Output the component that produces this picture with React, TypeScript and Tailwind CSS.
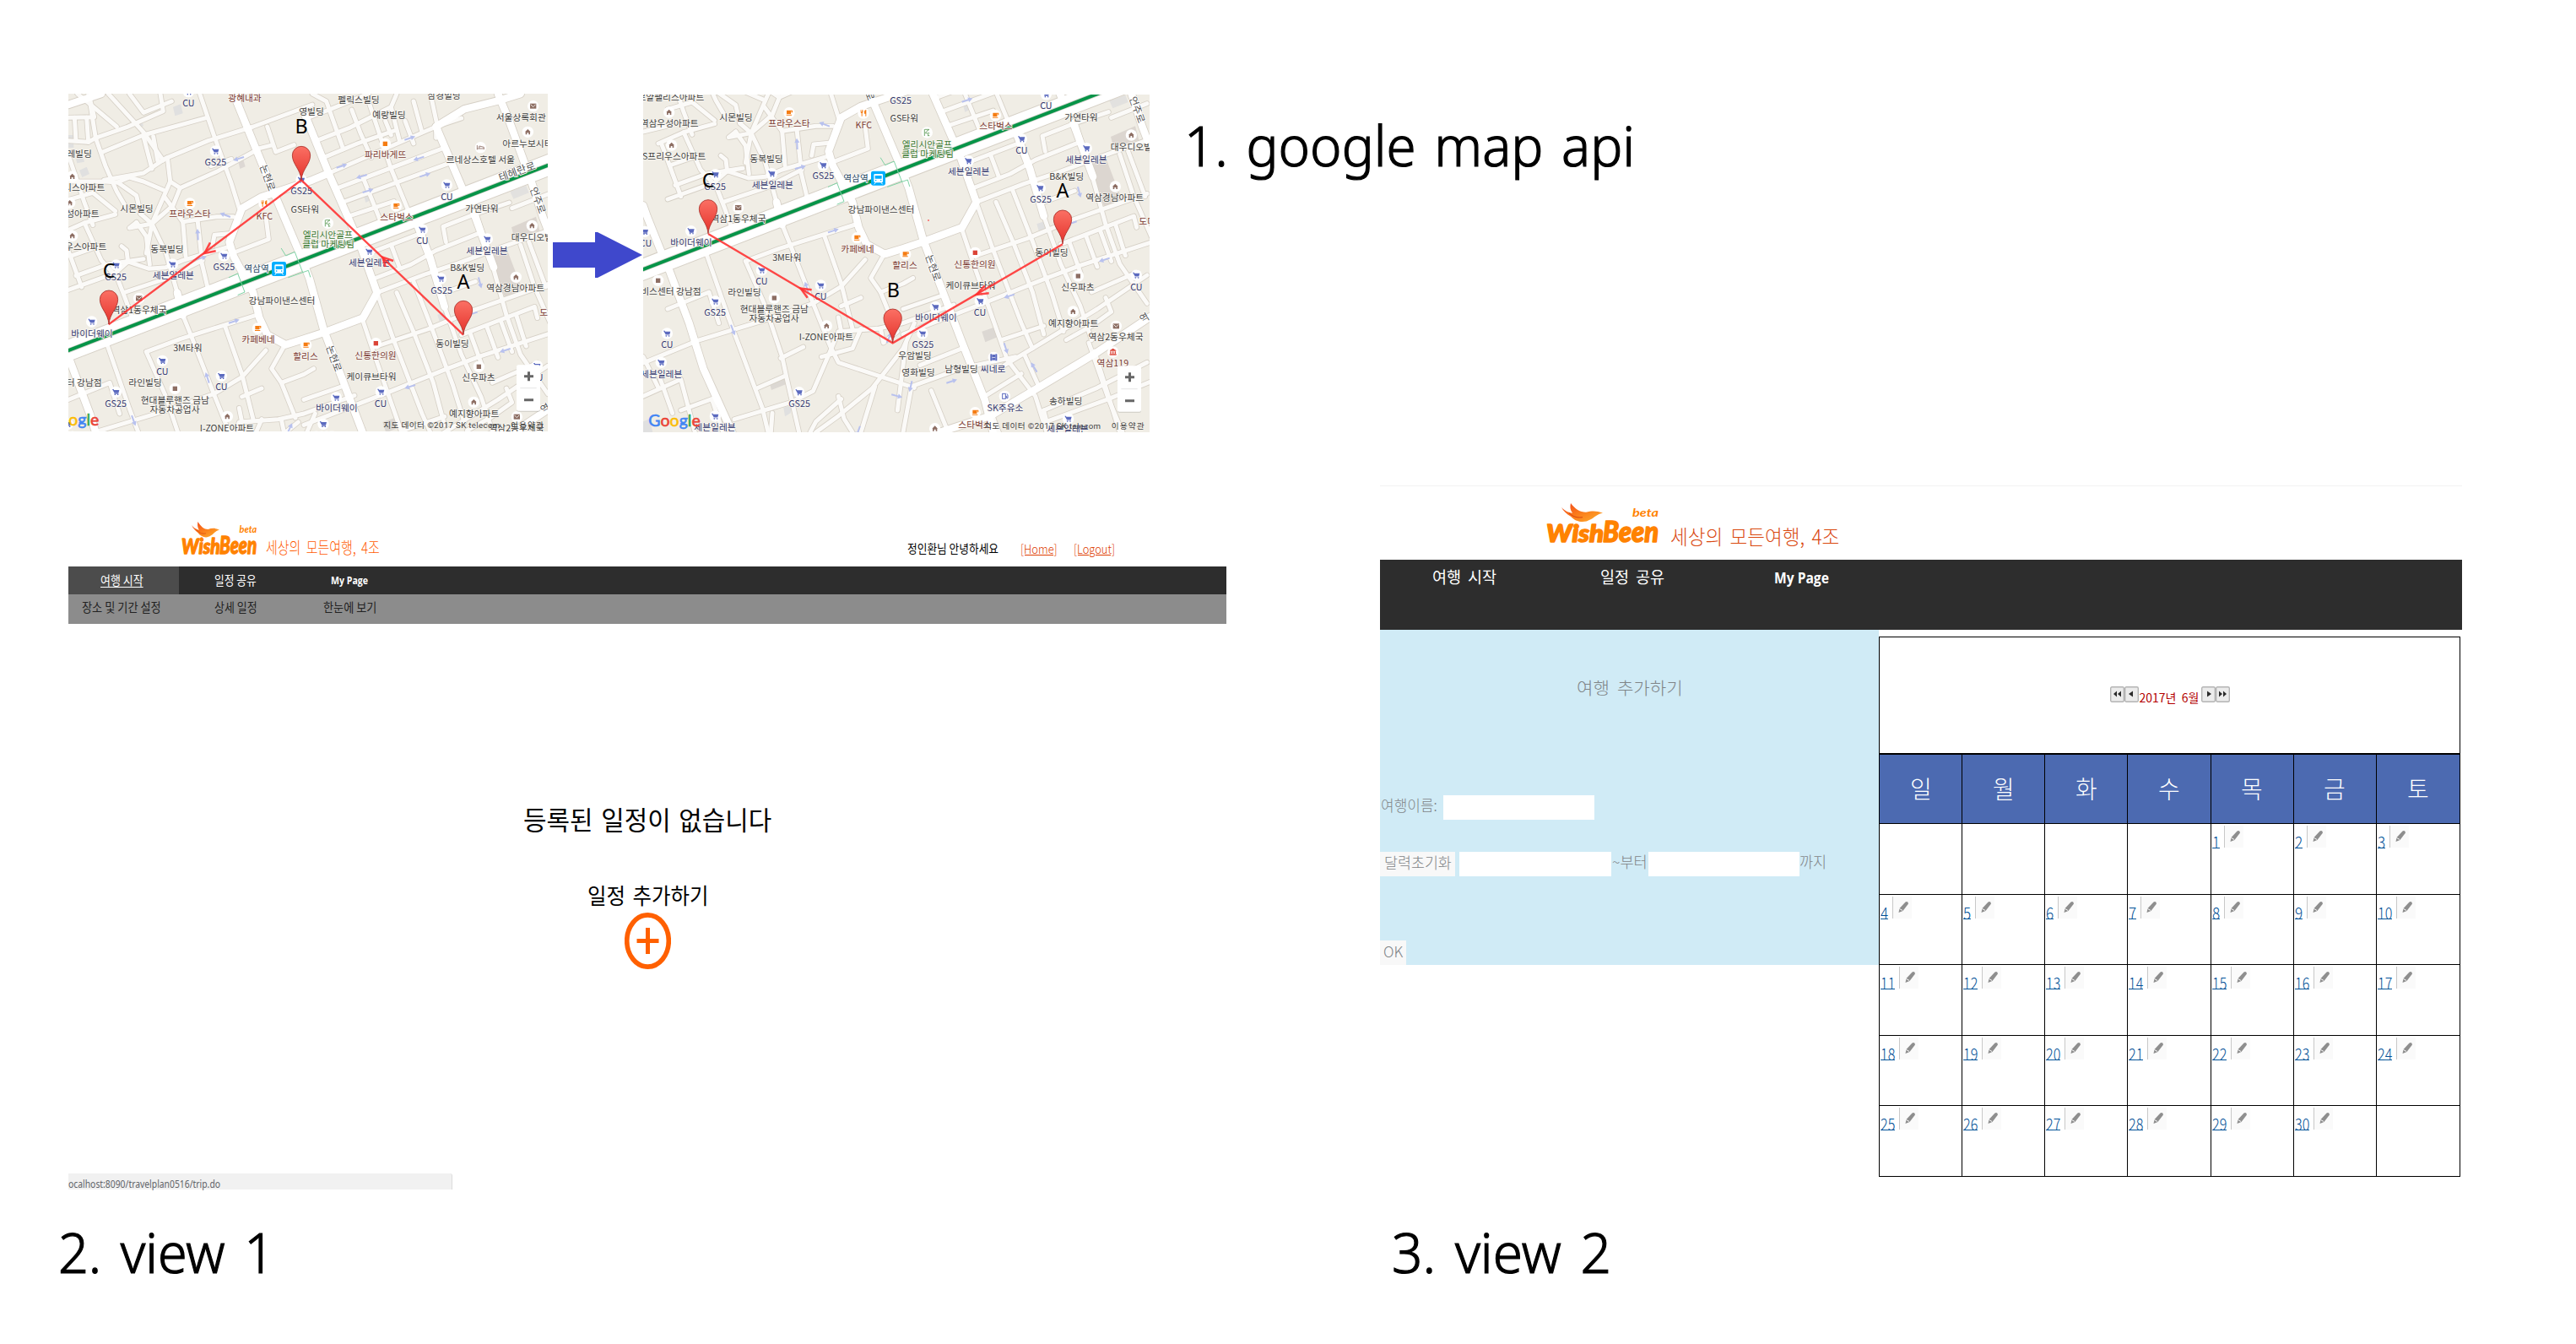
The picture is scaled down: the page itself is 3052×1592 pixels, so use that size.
import React, { useLayoutEffect, useRef, useState } from "react";

/* ---------- text squeezed or stretched to the width of its box ---------- */
function Fit({ className = "", line = "", children }: { className?: string; line?: string; children: React.ReactNode }) {
  const box = useRef<HTMLDivElement>(null);
  const inner = useRef<HTMLSpanElement>(null);
  const [scale, setScale] = useState(1);
  useLayoutEffect(() => {
    if (box.current && inner.current) setScale(box.current.clientWidth / inner.current.offsetWidth);
  }, []);
  return (
    <div ref={box} className={`shrink-0 whitespace-pre leading-none ${className}`}>
      <span ref={inner} className={`inline-block origin-left ${line}`} style={{ transform: `scaleX(${scale})` }}>
        {children}
      </span>
    </div>
  );
}

/* ------------------------------- map data ------------------------------- */
const patches: [string, string][] = [
  ["405,80 432,70 440,103 412,112", "#e0e0e0"],
  ["268,135 293,126 300,148 275,156", "#e0e0e0"],
  ["33,180 52,180 52,225 33,225", "#e0e0e0"],
  ["72,305 98,293 108,318 82,330", "#e0e0e0"],
  ["60,265 84,255 90,275 64,280", "#e0e0e0"],
  ["637,275 655,268 662,292 643,300", "#ddd8d4"],
  ["1603,380 1660,360 1670,385 1615,407", "#e2e1df"],
  ["1608,508 1695,470 1708,520 1618,545", "#dcd6d0"],
  ["1530,610 1590,582 1650,738 1585,758", "#dcd6d0"],
  ["1345,818 1372,808 1380,833 1352,842", "#e0e0e0"],
  ["1083,395 1100,388 1106,412 1090,420", "#e0e0e0"],
  ["830,1175 868,1160 872,1175 834,1190", "#e0e0e0"],
  ["1150,1200 1200,1183 1212,1217 1162,1238", "#dcd8d3"],
  ["395,1382 455,1362 460,1385 402,1408", "#dcd8d3"],
  ["445,1470 475,1462 470,1490 450,1502", "#e0e0e0"],
  ["-54,1520 -30,1510 -20,1560 -54,1560", "#e0e0e0"],
];

const minor: string[] = [
  "33,118 125,116 105,33",
  "65,33 110,70 205,150",
  "55,118 60,200",
  "98,118 104,205",
  "33,200 104,205 130,190",
  "105,33 130,190 165,290 205,380 240,440",
  "130,190 240,152 370,95 360,33",
  "155,240 300,180 525,118",
  "175,33 300,170 370,270",
  "250,33 300,100 400,60",
  "160,340 300,315 380,262 530,200 690,150 900,72",
  "500,33 550,180 612,350 640,440",
  "300,185 330,300",
  "335,185 350,270",
  "160,345 208,348 275,395 290,460",
  "208,348 250,330 300,345 370,375",
  "385,260 395,345 430,368 560,310 690,240",
  "430,368 405,430 330,495",
  "395,345 330,495 250,510 275,490",
  "33,250 60,330 90,420 120,500",
  "33,345 110,345 160,345",
  "33,410 120,385 200,450",
  "0,532 90,492 200,462",
  "10,530 40,610 80,720",
  "-54,490 30,470",
  "40,610 140,575",
  "90,492 150,625 210,690",
  "60,680 170,640 300,620",
  "290,460 330,495 380,600 420,740",
  "222,575 240,590 245,632",
  "275,490 310,540 322,640",
  "330,495 310,600",
  "375,400 440,488 560,470 620,470",
  "440,488 450,610",
  "492,480 505,600",
  "700,230 760,215",
  "545,575 552,535 605,530",
  "33,730 200,670 245,630 320,655 380,650 440,625 610,575",
  "200,670 235,760 260,830",
  "230,740 380,690 510,625",
  "505,625 530,730",
  "615,600 745,550 735,470",
  "540,290 612,265",
  "740,150 770,240 835,215",
  "33,1120 180,1060 215,1170",
  "-54,1312 140,1232 370,1162 550,1100 650,1040 735,945",
  "170,922 250,1152 370,1472 390,1558",
  "310,950 430,905 700,820",
  "310,950 380,1110 440,1290 455,1360 500,1558",
  "440,820 480,920 550,1100 610,1250 640,1310 850,1380 910,1400",
  "590,860 650,1030 690,1190",
  "350,1402 450,1358",
  "435,1295 515,1255",
  "270,1512 470,1452 550,1412 610,1272 640,1200 780,1190 870,1170 1050,1105",
  "800,930 755,1010 790,1060 840,1185",
  "790,1060 870,1030 905,1010",
  "650,1110 720,1080",
  "640,1150 650,1200",
  "790,1190 800,1240 850,1200",
  "720,1190 690,1260 580,1290",
  "910,1170 870,1260 760,1402 640,1500 560,1558",
  "650,1440 560,1520 540,1558",
  "400,1558 405,1490",
  "640,1430 660,1510 690,1558",
  "0,1350 50,1490",
  "-54,1430 80,1370 130,1558",
  "-54,1290 0,1400",
  "80,1480 190,1440 230,1558",
  "770,1395 720,1558",
  "880,1240 850,1480",
  "900,1395 870,1558",
  "1080,1260 930,1320",
  "900,1395 1080,1330 1270,1290",
  "970,1410 1030,1558",
  "880,120 960,90 1100,33",
  "915,200 1030,155 1180,80 1200,33",
  "940,260 1060,210 1190,165",
  "900,33 950,60 1010,230",
  "1040,90 1070,170 1110,260",
  "1100,60 1180,300 1250,470",
  "1160,130 1180,180",
  "1230,130 1260,210",
  "1180,80 1210,200",
  "1260,60 1290,170",
  "1320,33 1345,150",
  "960,315 1340,150",
  "985,370 1370,225",
  "1005,420 1400,275",
  "1025,470 1190,415",
  "1080,330 1140,480",
  "1100,600 1270,535",
  "1120,690 1250,640 1340,590 1490,530",
  "1375,560 1365,505 1480,460 1600,420",
  "1430,120 1340,150 1340,190",
  "1180,570 1210,650",
  "1130,740 1300,675 1420,635 1540,590 1737,520",
  "1480,450 1540,640 1590,820 1640,960 1737,1100",
  "1610,440 1737,390",
  "1370,740 1480,700",
  "1640,570 1690,720 1760,880",
  "1670,560 1730,720",
  "1080,840 1110,930 1180,1130 1240,1300 1340,1430 1380,1558",
  "1130,740 1190,910 1290,1170 1330,1260",
  "1200,740 1260,880 1330,1060 1370,1210",
  "1260,700 1330,880 1400,1070 1440,1200",
  "1370,790 1430,960 1500,1110 1540,1230",
  "1130,930 1310,870 1480,800 1737,710",
  "1430,890 1560,840 1690,790 1700,830",
  "1460,880 1500,990",
  "1520,860 1560,970",
  "1570,840 1610,950",
  "1625,820 1660,930",
  "870,1210 1000,1160 1180,1090 1380,1010 1500,965 1760,880",
  "870,1120 1000,1075",
  "1220,1230 1370,1180",
  "1230,1320 1380,1230 1560,1120 1737,1000",
  "1450,1230 1540,1180 1610,1130 1590,1080",
  "1540,1060 1700,990",
  "1160,1430 1290,1350",
  "1300,1280 1350,1390",
  "1530,1240 1600,1440 1650,1558",
  "1550,1270 1640,1558",
  "1370,1480 1560,1400 1737,1310",
  "1380,1520 1600,1440 1746,1380",
  "1390,1558 1370,1480",
  "1180,1480 1210,1558",
];

const medium: string[] = [
  "-54,752 -40,792 20,942",
  "620,33 700,230 770,400 855,600 890,690 940,870 1000,1030 1080,1240 1160,1442 1190,1558",
  "35,972 110,1172 160,1332 262,1558",
  "1560,33 1600,130 1680,350 1720,472 1750,550",
  "1270,490 1320,620 1370,790",
  "1340,150 1440,385",
  "1340,150 1440,88 1560,58 1640,33",
  "1475,460 1545,650",
  "875,110 960,320 1070,570 1130,740 1080,830 940,882 870,905 805,925 740,890 712,830 690,740 620,610 605,560 650,440 720,400 900,340 960,315",
  "420,740 440,820",
  "33,72 150,33",
  "1180,1500 1350,1400 1550,1280 1760,1140",
  "1000,1558 1180,1500",
];

type Kind = "dark" | "navy" | "brown" | "green";
type Icon = "cart" | "cup" | "fork" | "house" | "mail" | "sq" | "sqo" | "sqr" | "bed" | "golf" | "film" | "fuel" | "fire";
type Label = [number, number, string, Kind, Icon?, number?, number?, ("start" | "end")?];

const labels: Label[] = [
  [460, 66, "CU", "navy", "cart", 460, 26],
  [660, 47, "광혜내과", "brown"],
  [897, 96, "영빌딩", "dark"],
  [72, 247, "레빌딩", "dark"],
  [556, 276, "GS25", "navy", "cart", 556, 237],
  [163, 367, "로얄팰리스아파트", "dark", "house", 47, 327, "end"],
  [143, 460, "역삼우성아파트", "dark", "house", 38, 421, "end"],
  [169, 577, "S프리우스아파트", "dark", "house", 47, 538, "end"],
  [276, 440, "시몬빌딩", "dark"],
  [465, 460, "프라우스타", "brown", "cup", 465, 423],
  [730, 467, "KFC", "brown", "fork", 729, 424],
  [861, 378, "GS25", "navy", "cart", 861, 339],
  [874, 443, "GS타워", "dark"],
  [955, 535, "엘리시안골프", "green", "golf", 955, 493],
  [957, 568, "클럽 마케팅팀", "green"],
  [384, 586, "동복빌딩", "dark"],
  [201, 684, "GS25", "navy", "cart", 203, 642],
  [406, 678, "세븐일레븐", "navy", "cart", 403, 639],
  [586, 647, "GS25", "navy", "cart", 586, 609],
  [285, 800, "역삼1동우체국", "dark", "mail", 284, 760],
  [117, 884, "바이더웨이", "navy", "cart", 116, 843],
  [792, 767, "강남파이낸스센터", "dark"],
  [708, 907, "카페베네", "brown", "cup", 706, 867],
  [457, 936, "3M타워", "dark"],
  [876, 965, "할리스", "brown", "cup", 878, 926],
  [367, 1020, "CU", "navy", "cart", 367, 982],
  [577, 1074, "CU", "navy", "cart", 577, 1036],
  [306, 1060, "라인빌딩", "dark"],
  [152, 1058, "비스센터 강남점", "dark", "sq", -1, 1019, "end"],
  [201, 1133, "GS25", "navy", "cart", 202, 1093],
  [412, 1121, "현대블루핸즈 금남", "dark", "sq", 412, 1081],
  [411, 1154, "자동차공업사", "dark"],
  [597, 1220, "I-ZONE아파트", "dark", "house", 598, 1180],
  [1065, 54, "펠릭스빌딩", "dark"],
  [1368, 40, "삼경빌딩", "dark"],
  [1173, 108, "예랑빌딩", "dark"],
  [1160, 250, "파리바게뜨", "brown", "sqo", 1159, 211],
  [1498, 266, "르네상스호텔 서울", "dark", "bed", 1498, 224],
  [1553, 118, "서울상록회관", "dark", "mail", 1685, 77, "start"],
  [1576, 211, "아르누보시티", "dark", "house", 1666, 169, "start"],
  [1378, 398, "CU", "navy", "cart", 1378, 357],
  [1200, 470, "스타벅스", "brown", "cup", 1198, 432],
  [1503, 440, "가연타워", "dark"],
  [1291, 555, "CU", "navy", "cart", 1291, 516],
  [1521, 590, "세븐일레븐", "navy", "cart", 1522, 549],
  [1607, 544, "대우디오빌", "dark", "house", 1681, 502, "start"],
  [1103, 632, "세븐일레븐", "navy", "cart", 1102, 594],
  [1451, 650, "B&K빌딩", "dark"],
  [1359, 731, "GS25", "navy", "cart", 1357, 690],
  [1622, 724, "역삼경남아파트", "dark", "house", 1624, 685],
  [1708, 809, "도미노", "brown", undefined, 0, 0, "start"],
  [1398, 920, "동이빌딩", "dark"],
  [1125, 962, "신통한의원", "brown", "sqr", 1126, 920],
  [1110, 1037, "케이큐브타워", "dark"],
  [1491, 1042, "신우파츠", "dark", "sq", 1492, 1003],
  [1699, 1041, "CU", "navy", "cart", 1699, 1000],
  [987, 1150, "바이더웨이", "navy", "cart", 985, 1113],
  [1143, 1133, "CU", "navy", "cart", 1144, 1092],
  [1475, 1170, "예지향아파트", "dark", "house", 1474, 1129],
  [940, 1245, "GS25", "navy", "cart", 939, 1207],
  [1626, 1220, "역삼2동우체국", "dark", "mail", 1627, 1181],
  [-45, 886, "CU", "navy", "cart", -48, 845],
  [31, 1246, "CU", "navy", "cart", 31, 1207],
  [11, 1350, "세븐일레븐", "navy", "cart", 10, 1310],
  [912, 1286, "우암빌딩", "dark"],
  [924, 1346, "영화빌딩", "dark"],
  [1077, 1334, "남형빌딩", "dark"],
  [1190, 1334, "씨네로", "navy", "film", 1192, 1292],
  [501, 1455, "GS25", "navy", "cart", 500, 1416],
  [201, 1539, "세븐일레븐", "navy", "cart", 202, 1501],
  [1233, 1470, "SK주유소", "navy", "fuel", 1231, 1430],
  [1448, 1448, "송하빌딩", "dark"],
  [1125, 1530, "스타벅스", "brown", "cup", 1126, 1488],
  [1455, 1545, "세븐일레븐", "navy", "cart", 1457, 1510],
  [983, 1590, "", "dark", "house", 983, 1545],
  [1615, 1312, "역삼119", "brown", "fire", 1616, 1273],
];

const ways: [number, number, number][] = [
  [638, 264, 162], [590, 464, 200], [493, 533, -93], [505, 617, -15], [622, 842, -18], [527, 1042, -108],
  [265, 1195, 70], [820, 1222, -65], [1247, 191, -18], [1005, 290, -18], [1278, 263, 162], [1075, 327, 162],
  [1301, 322, -18], [1098, 378, -18], [1496, 705, 75], [1468, 815, 162], [1585, 945, 162], [1247, 1074, 162],
  [1235, 1260, 72], [1335, 1327, -122], [897, 1395, 103], [1043, 1377, -18], [848, 1429, 15], [710, 1555, 110],
];

function Glyph({ kind }: { kind: Icon }) {
  switch (kind) {
    case "cart":
      return (
        <g fill="#5b6abf">
          <path d="M-13-10h5l1 3H12L9 4H-5z" />
          <path d="M-5 5H9v2H-7z" />
          <rect x="-5" y="7" width="4" height="4" />
          <rect x="5" y="7" width="4" height="4" />
        </g>
      );
    case "cup":
      return <path d="M-9-9H12v8H6v5H-9zM6-6v3h3v-3zM-10 6H9v3h-19z" fill="#f57c12" fillRule="evenodd" />;
    case "fork":
      return <path d="M-10-12h2v7h2v-7h2v7h2v-7h1v9l-3 2v12h-3V1l-3-3zM3-4c0-5 3-8 7-8v23H7V2H3z" fill="#f57c12" />;
    case "house":
      return <path d="M0-10L10 0H8v9H3V3h-6v6h-5V0h-2z" fill="#8d6e63" />;
    case "mail":
      return (
        <g>
          <rect x="-11" y="-9" width="22" height="18" fill="#8d6e63" />
          <path d="M-9-6L0 3L9-6" fill="none" stroke="#fff" strokeWidth="2.5" />
        </g>
      );
    case "sq":
      return <rect x="-8" y="-8" width="16" height="16" fill="#8d6e63" />;
    case "sqo":
      return <rect x="-8" y="-8" width="16" height="16" fill="#f57c12" />;
    case "sqr":
      return <rect x="-8" y="-8" width="16" height="16" fill="#db4437" />;
    case "bed":
      return <path d="M-12-8v16M-12 4h24M12 7v-8L-4-5V3M-8-2h2" fill="none" stroke="#8d6e63" strokeWidth="2.5" />;
    case "golf":
      return <path d="M-9-12v24M-7-11H8L-1-5M-1-5l-5 7 10 1v9M4-1l5 4M2 11h7" fill="none" stroke="#5c9a55" strokeWidth="2.5" />;
    case "film":
      return (
        <g fill="#5b6abf">
          <rect x="-12" y="-12" width="6" height="24" />
          <rect x="6" y="-12" width="6" height="24" />
          <rect x="-6" y="-10" width="12" height="9" />
          <rect x="-6" y="1" width="12" height="9" />
        </g>
      );
    case "fuel":
      return (
        <g fill="none" stroke="#5b6abf" strokeWidth="3">
          <rect x="-8" y="-9" width="11" height="18" />
          <path d="M3 0h4v7h4v-12l-4-4" />
        </g>
      );
    case "fire":
      return <path d="M0-13L11-6V-4h-22v-2zM-10-2h4v8h-4zM-2-2h4v8h-4zM6-2h4v8H6zM-12 7h24v4h-24z" fill="#db4437" />;
  }
}

function MapLabel({ item }: { item: Label }) {
  const [x, y, text, kind, icon, ix, iy, anchor] = item;
  const fill = kind === "navy" ? "#33386f" : kind === "brown" ? "#7c3a33" : kind === "green" ? "#3b7a33" : "#3f3f3f";
  return (
    <g>
      {icon && (
        <g transform={`translate(${ix} ${iy})`}>
          <circle r="20" fill="#fff" />
          <Glyph kind={icon} />
        </g>
      )}
      <text
        x={x}
        y={y + 12}
        textAnchor={anchor ?? "middle"}
        fontSize="32.2"
        fill={fill}
        stroke="#f7f5f0"
        strokeWidth="5"
        strokeLinejoin="round"
        paintOrder="stroke"
      >
        {text}
      </text>
    </g>
  );
}

function Pin({ x, y, name, lx, ly }: { x: number; y: number; name: string; lx: number; ly: number }) {
  return (
    <g>
      <path
        transform={`translate(${x} ${y})`}
        d="M0-1C-3-40-32-58-32-89A32 32 0 0 1 32-89C32-58 3-40 0-1z"
        fill="url(#pinFill)"
        stroke="#a8302a"
        strokeWidth="2.5"
      />
      <text x={lx} y={ly} textAnchor="middle" fontSize="70" fill="#000" className="font-['Noto_Sans','Open_Sans',sans-serif]">
        {name}
      </text>
    </g>
  );
}

function StreetMap({ second }: { second?: boolean }) {
  const oy = second ? 1537 : 1212;
  const ox = second ? -35 : -42;
  const zx = second ? 1632 : 1626;
  const zy = second ? 1322 : 997;
  const cx = second ? 1158 : 1153;
  const cy = second ? 1545 : 1221;
  return (
    <svg
      className={
        second
          ? "h-[400px] w-[600px] shrink-0 font-['Noto_Sans_CJK_KR',sans-serif]"
          : "h-[400px] w-[568px] shrink-0 font-['Noto_Sans_CJK_KR',sans-serif]"
      }
      viewBox={second ? "-54 358 1800 1200" : "33 33 1704 1200"}
    >
      <defs>
        <linearGradient id="pinFill" x1="0" y1="0" x2="0" y2="1">
          <stop offset="0" stopColor="#fb7064" />
          <stop offset="1" stopColor="#e4322b" />
        </linearGradient>
      </defs>
      <rect x="-54" y="33" width="1800" height="1530" fill="#f0ede5" />
      {patches.map(([p, c]) => (
        <polygon key={p} points={p} fill={c} />
      ))}
      <g fill="none" strokeLinejoin="round" strokeLinecap="round">
        <g stroke="#d6d0c6">
          {minor.map((p) => (
            <polyline key={p} points={p} strokeWidth="20" />
          ))}
          {medium.map((p) => (
            <polyline key={p} points={p} strokeWidth="31" />
          ))}
          <path d="M-90 993L1790 267" strokeWidth="78" />
        </g>
        <g stroke="#fbfaf8">
          {minor.map((p) => (
            <polyline key={p} points={p} strokeWidth="15" />
          ))}
        </g>
        <g stroke="#fff">
          {medium.map((p) => (
            <polyline key={p} points={p} strokeWidth="26" />
          ))}
          <path d="M-90 993L1790 267" strokeWidth="72" />
        </g>
        <path d="M-90 993L1790 267" stroke="#b9b4a8" strokeWidth="17" opacity=".6" />
        <path d="M-90 993L1790 267" stroke="#069448" strokeWidth="12" />
        <path
          d="M604 686L635 672L660 738L636 748M790 583L806 609L836 596M815 686L886 661L893 684M838 596L866 668"
          stroke="#7fd3a5"
          strokeWidth="3"
        />
      </g>
      {ways.map(([x, y, a]) => (
        <path
          key={`${x}-${y}`}
          transform={`translate(${x} ${y}) rotate(${a})`}
          d="M-20-3H4V-9L20 0L4 9V3H-20z"
          fill="#b8c1ee"
        />
      ))}
      <g fontSize="35" fill="#555" stroke="#fff" strokeWidth="5" paintOrder="stroke" textAnchor="middle">
        <text transform="translate(729 336) rotate(70)">논현로</text>
        <text transform="translate(965 978) rotate(70)">논현로</text>
        <text transform="translate(1632 322) rotate(-20)" fontSize="37">
          테헤란로
        </text>
        <text transform="translate(1690 416) rotate(70)">언주로</text>
        <text transform="translate(1734 1162) rotate(-30)">역</text>
      </g>
      {labels.map((l, i) => (
        <MapLabel key={i} item={l} />
      ))}
      <text x="702" y="667" textAnchor="middle" fontSize="32" fill="#1d4560" stroke="#fff" strokeWidth="5" paintOrder="stroke">
        역삼역
      </text>
      <rect x="756" y="630" width="51" height="51" rx="7" fill="#00aeff" />
      <path
        d="M770 640h24q4 0 4 4v22q0 5-5 5h-22q-5 0-5-5v-22q0-4 4-4zM770 646v11h24v-11zM771 661v4h4v-4zM789 661v4h4v-4z"
        fill="#fff"
        fillRule="evenodd"
      />
      <path d="M772 671l-5 6M792 671l5 6" stroke="#fff" strokeWidth="3" />
      <g fill="none" stroke="#ff2f2f" strokeOpacity=".88" strokeWidth="7">
        {second ? (
          <>
            <path d="M1437 890L833 1241L177 853" />
            <path d="M1160 1037L1131 1069L1175 1064M545 1052L506 1047L530 1080" strokeWidth="7.5" />
            <circle cx="960" cy="805" r="1.5" strokeWidth="3" />
          </>
        ) : (
          <>
            <path d="M1437 890L861 340L176 853" />
            <path d="M1188 627L1150 614L1160 648M557 592L517 600L537 562" strokeWidth="7.5" />
          </>
        )}
      </g>
      <Pin x={1437} y={890} name="A" lx={1437} ly={725} />
      {second ? <Pin x={833} y={1241} name="B" lx={835} ly={1077} /> : <Pin x={861} y={341} name="B" lx={861} ly={174} />}
      <Pin x={177} y={853} name="C" lx={177} ly={687} />
      <text
        x={ox}
        y={oy}
        fontSize="59"
        textLength="184"
        lengthAdjust="spacingAndGlyphs"
        strokeWidth="1.8"
        className="font-['Lato','Open_Sans',sans-serif]"
      >
        <tspan fill="#4285f4" stroke="#4285f4">G</tspan>
        <tspan fill="#ea4335" stroke="#ea4335">o</tspan>
        <tspan fill="#fbbc05" stroke="#fbbc05">o</tspan>
        <tspan fill="#4285f4" stroke="#4285f4">g</tspan>
        <tspan fill="#34a853" stroke="#34a853">l</tspan>
        <tspan fill="#ea4335" stroke="#ea4335">e</tspan>
      </text>
      <g fontSize="29" fill="#444" className="font-['Roboto','Noto_Sans_CJK_KR',sans-serif]">
        <text x={cx} y={cy} textLength="414">
          지도 데이터 ©2017 SK telecom
        </text>
        <text x={cx + 452} y={cy} textLength="117">
          이용약관
        </text>
      </g>
      <rect x={zx} y={zy + 3} width="84" height="163" rx="6" fill="#000" opacity=".15" />
      <rect x={zx} y={zy} width="84" height="163" rx="6" fill="#fff" />
      <path d={`M${zx + 13} ${zy + 82}h58`} stroke="#e6e6e6" strokeWidth="3" />
      <path
        d={`M${zx + 27} ${zy + 40}h33M${zx + 43.5} ${zy + 23.5}v33M${zx + 27} ${zy + 124}h33`}
        stroke="#666"
        strokeWidth="9"
      />
    </svg>
  );
}

/* ------------------------------ site pieces ------------------------------ */
function Logo({ className }: { className: string }) {
  return (
    <svg className={className} viewBox="0 0 134 49" preserveAspectRatio="none">
      <defs>
        <linearGradient id="bird" x1="0" y1="0" x2="1" y2="1">
          <stop offset="0" stopColor="#f0471c" />
          <stop offset=".5" stopColor="#fb7d1b" />
          <stop offset="1" stopColor="#fdb02e" />
        </linearGradient>
      </defs>
      <path d="M18 5C23 10 26 11 31 12C28 8 28 4 29 0C34 7 40 11 47 11C54 9 60 9 67 12C60 13 58 17 52 20C44 25 34 22 29 16C24 13 20 9 18 5z" fill="url(#bird)" />
      <path d="M27 12C32 17 38 18 43 17" fill="none" stroke="#d9430f" strokeWidth="1" />
      <g fill="#ff8200" className="font-['Lato','Open_Sans',sans-serif] italic">
        <text x="102" y="16" fontSize="13" fontWeight="700" textLength="31" lengthAdjust="spacingAndGlyphs">
          beta
        </text>
        <g stroke="#ff8200" strokeWidth="1.6" strokeLinejoin="round" fontWeight="900">
          <text x="0" y="47" fontSize="29" textLength="68" lengthAdjust="spacingAndGlyphs">
            Wish
          </text>
          <text x="67" y="47" fontSize="35" textLength="66" lengthAdjust="spacingAndGlyphs">
            Been
          </text>
        </g>
      </g>
    </svg>
  );
}

function NoTrips() {
  return (
    <section className="flex h-[834px] w-[1372px] flex-col">
      <header className="flex h-[96px] items-start pt-[43px]">
        <Logo className="ml-[134px] h-[40px] w-[90px]" />
        <Fit className="ml-[10px] mt-[20px] w-[135px] text-[19px] font-light text-[#ff5a00]" line="[word-spacing:0.2em]">세상의 모든여행, 4조</Fit>
        <Fit className="ml-[625px] mt-[24px] w-[108px] text-[14px] text-black">정인환님 안녕하세요</Fit>
        <Fit className="ml-[26px] mt-[24px] w-[44px] text-[15px] font-light text-[#dd3b00]" line="underline">[Home]</Fit>
        <Fit className="ml-[19px] mt-[24px] w-[49px] text-[15px] font-light text-[#dd3b00]" line="underline">[Logout]</Fit>
      </header>
      <nav className="flex h-[33px] gap-1 bg-[#2d2d2d] text-[15px] text-white">
        <div className="flex w-[131px] justify-center bg-[#4c4c4c] pr-[5px] pt-[8px]">
          <Fit className="w-[51px]" line="underline underline-offset-2">여행 시작</Fit>
        </div>
        <div className="flex w-[131px] justify-center pr-[5px] pt-[8px]">
          <Fit className="w-[50px]">일정 공유</Fit>
        </div>
        <div className="flex w-[131px] justify-center pr-[5px] pt-[10px]">
          <Fit className="w-[44px] font-['Open_Sans',sans-serif] text-[13px] font-bold">My Page</Fit>
        </div>
      </nav>
      <div className="flex h-[35px] gap-1 bg-[#8c8c8c] pt-[7px] text-[15px] text-[#222]">
        <div className="flex w-[131px] justify-center pr-[5px]">
          <Fit className="w-[94px]">장소 및 기간 설정</Fit>
        </div>
        <div className="flex w-[131px] justify-center pr-[5px]">
          <Fit className="w-[51px]">상세 일정</Fit>
        </div>
        <div className="flex w-[131px] justify-center pr-[5px]">
          <Fit className="w-[63px]">한눈에 보기</Fit>
        </div>
      </div>
      <div className="flex grow flex-col items-center pt-[215px] text-black">
        <Fit className="h-[32px] w-[294px] text-[31px]" line="[word-spacing:0.1em]">등록된 일정이 없습니다</Fit>
        <Fit className="mt-[61px] h-[30px] w-[143px] text-[26px]" line="[word-spacing:0.12em]">일정 추가하기</Fit>
        <svg className="mt-[4px] h-[67px] w-[55px]" viewBox="0 0 55 67">
          <ellipse cx="27.5" cy="33.5" rx="24.8" ry="30.6" fill="none" stroke="#ff6000" strokeWidth="5.6" />
          <path d="M14.5 33.5h26M27.5 18v31" stroke="#ff6000" strokeWidth="5" />
        </svg>
      </div>
      <div className="h-[19px] w-[455px] rounded-tr-[3px] border-r border-[#dcdcdc] bg-[#f1f1f1] pt-[6px] font-['Noto_Sans',sans-serif] text-[13px] text-[#5f6368]">
        <Fit className="w-[180px]">ocalhost:8090/travelplan0516/trip.do</Fit>
      </div>
    </section>
  );
}

const weekdays = ["일", "월", "화", "수", "목", "금", "토"];
const cells: (number | null)[] = [null, null, null, null, ...Array.from({ length: 30 }, (_, i) => i + 1), null];

function PagerButton({ d }: { d: string }) {
  return (
    <svg className="h-[19px] w-[17px]" viewBox="0 0 17 19">
      <rect x=".7" y=".7" width="15.6" height="17.6" rx="1.5" fill="#ececec" stroke="#b4b4b4" strokeWidth="1.4" />
      <path d={d} fill="#2b2b2b" />
    </svg>
  );
}

function Calendar() {
  return (
    <div className="mt-[8px] flex w-[689px] flex-col border border-black bg-white">
      <div className="flex h-[139px] items-start justify-center border-b-2 border-black pt-[58px]">
        <PagerButton d="M8 5.5v7L4 9zM13 5.5v7L9 9z" />
        <PagerButton d="M10 5.5v7L5 9z" />
        <Fit className="ml-px mr-[2px] mt-[6px] w-[71px] text-[14px] text-[#b30000]">2017년  6월</Fit>
        <PagerButton d="M7 5.5v7L12 9z" />
        <PagerButton d="M4 5.5v7L8 9zM9 5.5v7L13 9z" />
      </div>
      <div className="grid grid-cols-7 border-b border-black bg-[#4c6ab1]">
        {weekdays.map((d) => (
          <div key={d} className="flex h-[81px] justify-center border-r border-black pt-[25px] last:border-r-0">
            <Fit className="w-[26px] text-[29px] font-light text-white">{d}</Fit>
          </div>
        ))}
      </div>
      <div className="grid grid-cols-7">
        {cells.map((n, i) => (
          <div
            key={i}
            className={`flex items-start border-black pl-px ${i < 28 ? "h-[83.5px] border-b" : "h-[83px]"} ${i % 7 < 6 ? "border-r" : ""}`}
          >
            {n !== null && (
              <>
                <Fit
                  className={`mt-[11px] border-b border-[#0b5a9a] text-[19px] font-light text-[#004f96] ${n < 10 ? "h-[18px] w-[9px]" : "h-[18px] w-[17px]"}`}
                  line="-mt-[2px]"
                >
                  {n}
                </Fit>
                <svg className="ml-[5px] mt-[2px] h-[26px] w-[23px]" viewBox="0 0 23 26">
                  <rect width="23" height="26" fill="#fafafa" />
                  <path d="M.5 0v26" stroke="#c8c8c8" />
                  <path d="M7.5 19L8.500 14L15.500 6.500Q18.500 5 19 8.500L12.500 17z" fill="#8e8e8e" />
                  <path d="M8.300 14.300l3.800 2.200" stroke="#fafafa" />
                </svg>
              </>
            )}
          </div>
        ))}
      </div>
    </div>
  );
}

function AddTrip() {
  return (
    <section className="flex h-[820px] w-[1282px] flex-col border-t border-[#f2f2f2]">
      <header className="flex h-[87px] items-start pt-[20px]">
        <Logo className="ml-[197px] h-[48px] w-[134px]" />
        <Fit className="ml-[13px] mt-[27px] w-[200px] text-[24px] font-light text-[#d9480f]" line="[word-spacing:0.15em]">세상의 모든여행, 4조</Fit>
      </header>
      <nav className="flex h-[83px] bg-[#2d2d2d] pl-[62px] pt-[10px] text-[19px] text-white">
        <Fit className="w-[76px]" line="[word-spacing:0.2em]">여행 시작</Fit>
        <Fit className="ml-[123px] w-[76px]" line="[word-spacing:0.2em]">일정 공유</Fit>
        <Fit className="ml-[130px] mt-[2px] w-[65px] font-['Open_Sans',sans-serif] text-[18px] font-bold">My Page</Fit>
      </nav>
      <div className="flex">
        <form className="flex h-[397px] w-[591px] flex-col bg-[#d0ebf6] text-[18px] font-light text-[#7f8487]">
          <Fit className="ml-[233px] mt-[59px] h-[20px] w-[126px] text-[20px]" line="[word-spacing:0.2em]">여행 추가하기</Fit>
          <div className="mt-[117px] flex h-[29px]">
            <Fit className="ml-px mt-[2px] w-[67px]">여행이름:</Fit>
            <div className="ml-[7px] w-[179px] bg-white" />
          </div>
          <div className="mt-[38px] flex h-[29px]">
            <div className="flex w-[89px] justify-center bg-[#f8f8f8] pt-[3px]">
              <Fit className="w-[80px]">달력초기화</Fit>
            </div>
            <div className="ml-[5px] w-[180px] bg-white" />
            <Fit className="ml-px mr-px mt-[2px] w-[42px]">~부터</Fit>
            <div className="w-[179px] bg-white" />
            <Fit className="mt-[2px] w-[32px]">까지</Fit>
          </div>
          <div className="mt-[76px] flex h-[29px] w-[31px] justify-center bg-[#f8f8f8] pt-[3px]">
            <Fit className="w-[23px]">OK</Fit>
          </div>
        </form>
        <Calendar />
      </div>
    </section>
  );
}

export default function App() {
  return (
    <main className="flex h-[1592px] w-[3052px] flex-col overflow-hidden bg-white font-['Noto_Sans_CJK_KR',sans-serif]">
      <div className="flex h-[575px] items-start pl-[81px] pt-[111px]">
        <StreetMap />
        <svg className="ml-[6px] mt-[164px] h-[54px] w-[106px] shrink-0" viewBox="0 0 106 54">
          <path d="M0 12H50V0H53L106 27L53 54H50V42H0z" fill="#3f48cc" />
        </svg>
        <div className="ml-px mt-px">
          <StreetMap second />
        </div>
        <Fit
          className="ml-[41px] mt-[27px] w-[534px] font-['Noto_Sans',sans-serif] text-[66px] font-light text-black [-webkit-text-stroke:1.2px_black]"
          line="[word-spacing:0.08em]"
        >
          1. google map api
        </Fit>
      </div>
      <div className="flex items-start pl-[81px]">
        <NoTrips />
        <div className="ml-[182px]">
          <AddTrip />
        </div>
      </div>
      <div className="flex pl-[69px] pt-[40px] font-['Noto_Sans',sans-serif] text-[66px] font-light text-black [-webkit-text-stroke:1.2px_black]">
        <Fit className="w-[256px]" line="[word-spacing:0.1em]">2. view 1</Fit>
        <Fit className="ml-[1324px] w-[260px]" line="[word-spacing:0.1em]">3. view 2</Fit>
      </div>
    </main>
  );
}
